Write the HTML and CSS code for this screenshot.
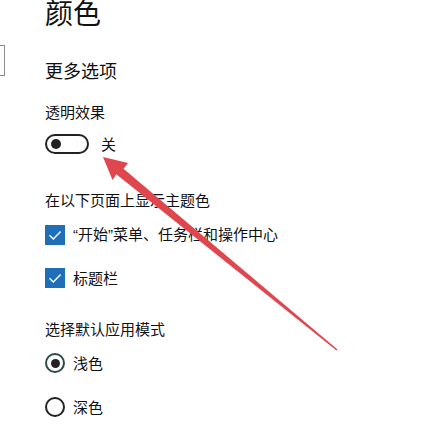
FILE: index.html
```html
<!DOCTYPE html>
<html lang="zh-CN">
<head>
  <meta charset="UTF-8">
  <title>颜色</title>
  <link rel="stylesheet" href="styles.css">
</head>
<body>
  <div class="window">
    <div class="sidebar">
      <div class="search-box"></div>
    </div>
    <div class="settings">
      <h1 class="page-title">颜色</h1>
      <h2 class="section-title">更多选项</h2>

      <div class="group">
        <div class="group-label">透明效果</div>
        <div class="toggle-row">
          <span class="toggle"><span class="knob"></span></span>
          <span class="toggle-text">关</span>
        </div>
      </div>

      <div class="group group-accent">
        <div class="group-label">在以下页面上显示主题色</div>
        <div class="check-row">
          <span class="checkbox">
            <svg viewBox="0 0 20 20" width="20" height="20"><path d="M4.5 10.2 L8.3 14 L15.6 6.4" fill="none" stroke="#fff" stroke-width="1.4"/></svg>
          </span>
          <span><span class="quote">“</span>开始<span class="quote">”</span>菜单、任务栏和操作中心</span>
        </div>
        <div class="check-row">
          <span class="checkbox">
            <svg viewBox="0 0 20 20" width="20" height="20"><path d="M4.5 10.2 L8.3 14 L15.6 6.4" fill="none" stroke="#fff" stroke-width="1.4"/></svg>
          </span>
          <span>标题栏</span>
        </div>
      </div>

      <div class="group group-mode">
        <div class="group-label">选择默认应用模式</div>
        <div class="radio-row">
          <span class="radio checked"><span class="dot"></span></span>
          <span>浅色</span>
        </div>
        <div class="radio-row">
          <span class="radio"></span>
          <span>深色</span>
        </div>
      </div>
    </div>
  </div>

  <svg class="arrow" width="437" height="426" viewBox="0 0 437 426">
    <polygon fill="#e0464d" points="103,157 128,163 123.5,168.8 337.5,349.4 336.5,350.6 116.3,174.2 112.5,180"/>
  </svg>
</body>
</html>
```

FILE: styles.css
```css
* {
  box-sizing: border-box;
  margin: 0;
  padding: 0;
}

body {
  width: 437px;
  height: 426px;
  overflow: hidden;
  background: #fff;
  color: #111;
  font-family: "Noto Sans CJK SC", "Noto Sans", sans-serif;
  position: relative;
}

.window {
  display: flex;
}

.sidebar {
  width: 5px;
  padding-top: 45px;
}

.search-box {
  width: 5px;
  height: 31px;
  border: 1px solid #8a8a8a;
  border-left: none;
}

.settings {
  padding-left: 40px;
}

.page-title {
  font-size: 28px;
  font-weight: 400;
  line-height: 28px;
  margin-top: -2px;
}

.section-title {
  font-size: 18px;
  font-weight: 400;
  line-height: 24px;
  margin-top: 32px;
}

.group {
  margin-top: 20px;
  font-size: 15px;
  line-height: 20px;
}

.toggle-row {
  display: flex;
  align-items: center;
  gap: 12px;
  margin-top: 12px;
}

.toggle {
  width: 44px;
  height: 20px;
  border: 2px solid #222;
  border-radius: 10px;
  display: flex;
  align-items: center;
  padding-left: 4px;
}

.knob {
  width: 10px;
  height: 10px;
  border-radius: 50%;
  background: #222;
}

.group-accent {
  margin-top: 36px;
}

.check-row {
  display: flex;
  align-items: center;
  gap: 8px;
  margin-top: 14px;
}

.check-row + .check-row {
  margin-top: 23px;
}

.quote {
  font-family: "Liberation Sans", sans-serif;
}

.checkbox {
  width: 20px;
  height: 20px;
  background: #1f6fb8;
  display: block;
}

.checkbox svg {
  display: block;
}

.group-mode {
  margin-top: 31px;
}

.radio-row {
  display: flex;
  align-items: center;
  gap: 8px;
  margin-top: 14px;
}

.radio-row + .radio-row {
  margin-top: 24px;
}

.radio {
  width: 20px;
  height: 20px;
  border: 2px solid #222;
  border-radius: 50%;
  display: flex;
  align-items: center;
  justify-content: center;
}

.radio.checked {
  border-color: #2b4a4a;
}

.dot {
  width: 9px;
  height: 9px;
  border-radius: 50%;
  background: #222;
}

.arrow {
  position: absolute;
  left: 0;
  top: 0;
  pointer-events: none;
}
```
